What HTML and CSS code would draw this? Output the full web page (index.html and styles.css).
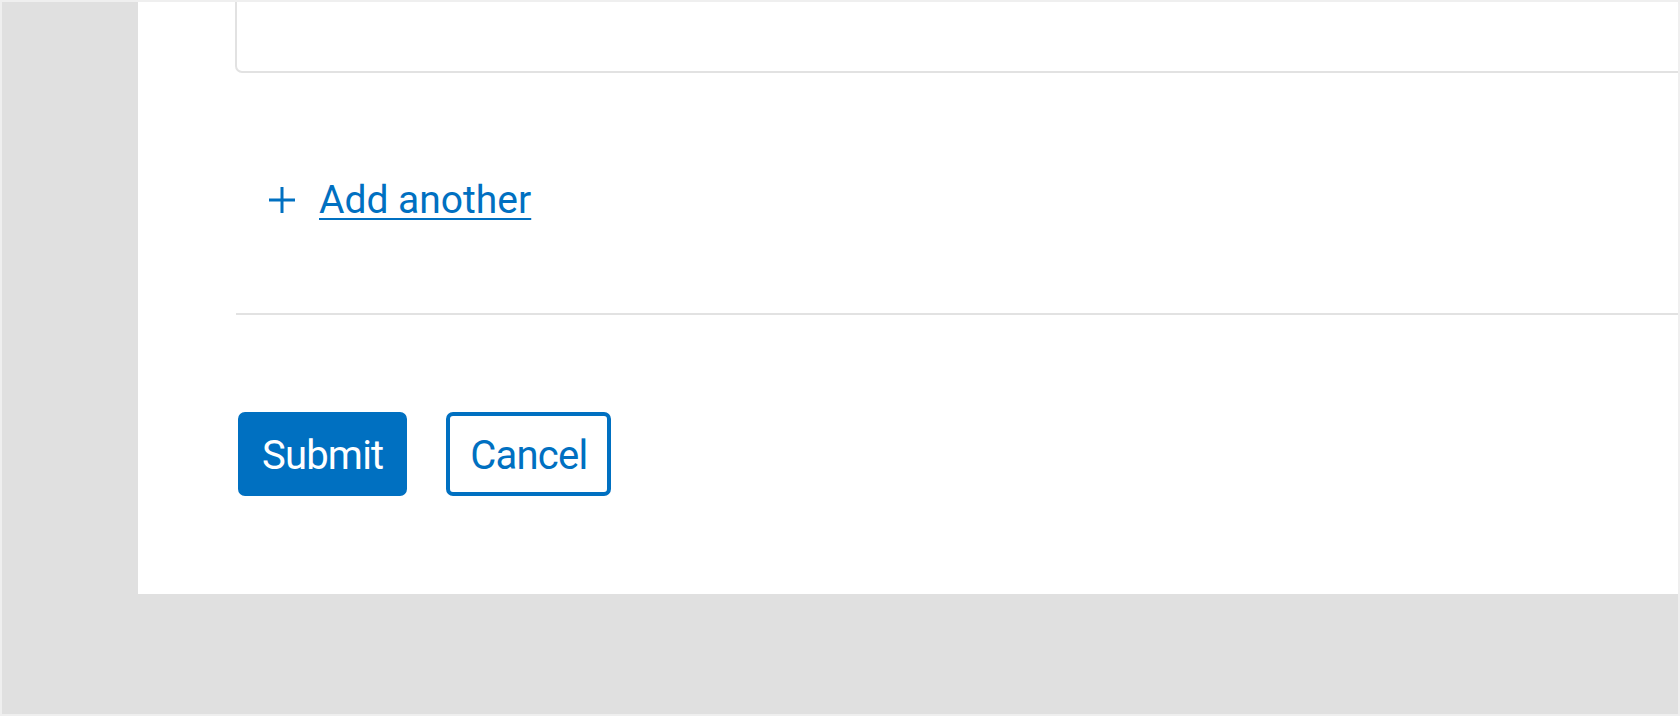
FILE: index.html
```html
<!DOCTYPE html>
<html lang="en">
<head>
<meta charset="utf-8">
<title>Form</title>
<link rel="stylesheet" href="styles.css">
</head>
<body>
<div class="frame">
  <div class="panel">
    <div class="content">
      <div class="field-box"></div>
      <div class="add-row">
        <svg class="plus" width="26" height="26" viewBox="0 0 26 26" aria-hidden="true">
          <path d="M13 0.5V25.5M0.5 13H25.5" stroke="#0070c1" stroke-width="3" stroke-linecap="round" fill="none"/>
        </svg>
        <a class="add-link" href="#">Add another</a>
      </div>
      <div class="divider"></div>
      <div class="actions">
        <button class="btn btn-primary" type="button">Submit</button>
        <button class="btn btn-secondary" type="button">Cancel</button>
      </div>
    </div>
  </div>
</div>
</body>
</html>
```

FILE: styles.css
```css
html, body {
  margin: 0;
  padding: 0;
}
body {
  width: 1680px;
  height: 716px;
  overflow: hidden;
  font-family: Roboto, "Liberation Sans", sans-serif;
}
.frame {
  box-sizing: border-box;
  width: 1680px;
  height: 716px;
  border: 2px solid #efefef;
  background: #e0e0e0;
  padding-left: 136px;
}
.panel {
  height: 592px;
  background: #ffffff;
  overflow: hidden;
}
.content {
  margin-left: 98px;
  width: 1600px;
}
.field-box {
  box-sizing: border-box;
  margin-top: -20px;
  margin-left: -1px;
  height: 91px;
  border: 2px solid #e2e2e2;
  border-radius: 7px;
}
.add-row {
  display: flex;
  align-items: center;
  height: 52px;
  margin-top: 101px;
  margin-bottom: 87px;
  padding-left: 33px;
  gap: 24px;
}
.plus {
  display: block;
  flex: none;
}
.add-link {
  font-size: 39px;
  line-height: 52px;
  color: #0070c1;
  text-decoration: underline;
  text-decoration-thickness: 2px;
  text-underline-offset: 5px;
}
.divider {
  height: 2px;
  background: #e2e2e2;
}
.actions {
  display: flex;
  gap: 39px;
  margin-top: 97px;
  margin-left: 2px;
}
.btn {
  box-sizing: border-box;
  height: 84px;
  font-family: Roboto, "Liberation Sans", sans-serif;
  font-size: 40px;
  line-height: 72px;
  letter-spacing: -0.8px;
  border: 4px solid #0070c1;
  border-radius: 7px;
  padding: 4px 20px 0;
  cursor: pointer;
}
.btn-primary {
  background: #0070c1;
  color: #ffffff;
}
.btn-secondary {
  background: #ffffff;
  color: #0070c1;
}
```
